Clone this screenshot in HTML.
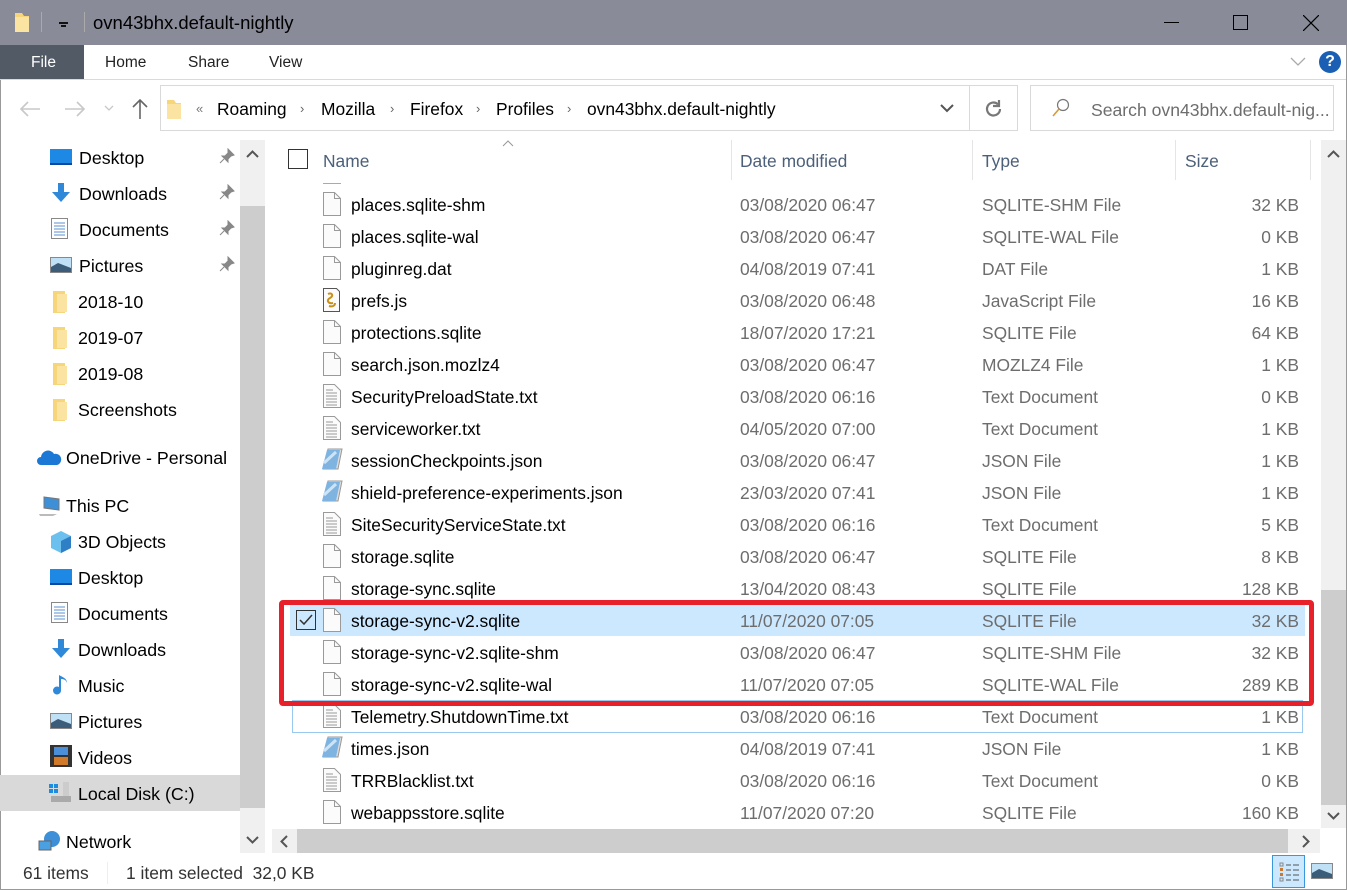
<!DOCTYPE html>
<html><head><meta charset="utf-8"><style>
*{margin:0;padding:0;box-sizing:border-box}
body{width:1347px;height:890px;overflow:hidden;background:#fff;font-family:"Liberation Sans",sans-serif;font-size:17.4px;color:#000;position:relative}
.a{position:absolute}
.t{position:absolute;white-space:nowrap;line-height:20px}
.row{position:absolute;left:272px;width:1048px;height:32px}
.row .n{position:absolute;left:79px;top:7px;white-space:nowrap}
.row .d{position:absolute;left:468px;top:7px;color:#6d6d6d}
.row .y{position:absolute;left:710px;top:7px;color:#6d6d6d}
.row .s{position:absolute;right:21px;top:7px;color:#6d6d6d}
.row svg{position:absolute;left:50px;top:4px}
.nav{position:absolute;white-space:nowrap;line-height:20px;font-size:17.8px;margin-top:1px}
.ic{position:absolute}
.hd{position:absolute;top:151px;color:#4c607a;line-height:20px}
.sep{position:absolute;top:140px;width:1px;height:40px;background:#e5e5e5}
</style></head><body>
<div class="a" style="left:0;top:0;width:1347px;height:45px;background:#898b98"></div>
<svg class="a" style="left:14px;top:11px" width="16" height="22"><path d="M1 2h7l2 3h5v16H1z" fill="#f7d57a"/><path d="M1 6h14v15H1z" fill="#fbe3a1"/></svg>
<div class="a" style="left:41px;top:12px;width:1px;height:20px;background:#aaa"></div>
<div class="a" style="left:59px;top:22px;width:9px;height:2px;background:#111"></div>
<div class="a" style="left:61px;top:25px;width:5px;height:2px;background:#111"></div>
<div class="a" style="left:84px;top:12px;width:1px;height:20px;background:#aaa"></div>
<div class="t" style="left:93px;top:13px;font-size:18.5px">ovn43bhx.default-nightly</div>
<div class="a" style="left:1164px;top:22px;width:15px;height:1px;background:#000"></div>
<div class="a" style="left:1233px;top:15px;width:15px;height:15px;border:1px solid #000"></div>
<svg class="a" style="left:1303px;top:15px" width="16" height="16"><path d="M0 0L16 16M16 0L0 16" stroke="#000" stroke-width="1.2"/></svg>
<div class="a" style="left:0;top:45px;width:84px;height:34px;background:#525a66"></div>
<div class="t" style="left:31px;top:53px;color:#fff;font-size:15.5px">File</div>
<div class="t" style="left:105px;top:53px;font-size:15.5px;color:#222">Home</div>
<div class="t" style="left:188px;top:53px;font-size:15.5px;color:#222">Share</div>
<div class="t" style="left:269px;top:53px;font-size:15.5px;color:#222">View</div>
<svg class="a" style="left:1290px;top:57px" width="16" height="10"><path d="M1 1l7 7 7-7" stroke="#aaa" fill="none" stroke-width="1.3"/></svg>
<div class="a" style="left:1319px;top:51px;width:22px;height:22px;border-radius:50%;background:#1a5fb4;color:#fff;font-weight:bold;font-size:16px;text-align:center;line-height:22px">?</div>
<div class="a" style="left:0;top:79px;width:1347px;height:1px;background:#dadada"></div>
<svg class="a" style="left:18px;top:100px" width="24" height="18"><path d="M22 9H3M10 2L3 9l7 7" stroke="#c8c8c8" fill="none" stroke-width="1.6"/></svg>
<svg class="a" style="left:63px;top:100px" width="24" height="18"><path d="M2 9h19M14 2l7 7-7 7" stroke="#c8c8c8" fill="none" stroke-width="1.6"/></svg>
<svg class="a" style="left:104px;top:105px" width="10" height="6"><path d="M1 1l4 4 4-4" stroke="#c8c8c8" fill="none" stroke-width="1.3"/></svg>
<svg class="a" style="left:131px;top:98px" width="18" height="22"><path d="M9 21V2M2 9l7-7 7 7" stroke="#666" fill="none" stroke-width="1.6"/></svg>
<div class="a" style="left:160px;top:85px;width:810px;height:46px;border:1px solid #d9d9d9"></div>
<div class="a" style="left:969px;top:85px;width:49px;height:46px;border:1px solid #d9d9d9"></div>
<svg class="a" style="left:166px;top:98px" width="16" height="22"><path d="M1 2h7l2 3h5v16H1z" fill="#f7d57a"/><path d="M1 6h14v15H1z" fill="#fbe3a1"/></svg>
<div class="t" style="left:196px;top:99px;font-size:13px;color:#777">«</div>
<div class="t" style="left:217px;top:99px">Roaming</div>
<div class="t" style="left:300px;top:99px;font-size:13px;color:#666">›</div>
<div class="t" style="left:321px;top:99px">Mozilla</div>
<div class="t" style="left:390px;top:99px;font-size:13px;color:#666">›</div>
<div class="t" style="left:410px;top:99px">Firefox</div>
<div class="t" style="left:476px;top:99px;font-size:13px;color:#666">›</div>
<div class="t" style="left:496px;top:99px">Profiles</div>
<div class="t" style="left:567px;top:99px;font-size:13px;color:#666">›</div>
<div class="t" style="left:587px;top:99px">ovn43bhx.default-nightly</div>
<svg class="a" style="left:940px;top:104px" width="14" height="9"><path d="M1 1l6 6 6-6" stroke="#555" fill="none" stroke-width="2"/></svg>
<svg class="a" style="left:984px;top:99px" width="20" height="20"><path d="M16 10a6.5 6.5 0 1 1-2-4.7" stroke="#777" fill="none" stroke-width="2.2"/><path d="M15 1v6h-6" fill="none" stroke="#777" stroke-width="2.2"/></svg>
<div class="a" style="left:1030px;top:85px;width:304px;height:46px;border:1px solid #d9d9d9"></div>
<svg class="a" style="left:1051px;top:98px" width="20" height="20"><circle cx="12" cy="7" r="5.5" stroke="#777" fill="none" stroke-width="1.2"/><path d="M8 11l-6 7" stroke="#d69b3a" stroke-width="1.6"/></svg>
<div class="t" style="left:1091px;top:100px;color:#6d6d6d;font-size:17.6px">Search ovn43bhx.default-nig...</div>
<div class="a" style="left:0;top:80px;width:1px;height:810px;background:#999"></div>
<div class="a" style="left:1346px;top:45px;width:1px;height:845px;background:#999"></div>
<div class="a" style="left:0;top:775px;width:240px;height:36px;background:#d9d9d9"></div>
<svg class="ic" style="left:50px;top:149px" width="22" height="17"><rect x="0" y="0" width="22" height="16" fill="#1e88e5"/><rect x="0" y="14" width="22" height="2" fill="#0d47a1"/></svg>
<div class="nav" style="left:79px;top:147px">Desktop</div>
<svg class="ic" style="left:51px;top:183px" width="20" height="20"><path d="M7 0h6v9h6l-9 10-9-10h6z" fill="#2f88d8"/></svg>
<div class="nav" style="left:79px;top:183px">Downloads</div>
<svg class="ic" style="left:51px;top:218px" width="18" height="22"><rect x=".5" y=".5" width="16" height="20" fill="#fff" stroke="#888"/><path d="M3 5h11M3 8h11M3 11h11M3 14h11M3 17h11" stroke="#5b8fd0"/></svg>
<div class="nav" style="left:79px;top:219px">Documents</div>
<svg class="ic" style="left:50px;top:257px" width="22" height="17"><rect x=".5" y=".5" width="21" height="15" fill="#bfe0f5" stroke="#888"/><path d="M1 10l7-4 13 5v4H1z" fill="#3b5d7a"/></svg>
<div class="nav" style="left:79px;top:255px">Pictures</div>
<svg class="ic" style="left:219px;top:148px" width="16" height="16"><path d="M9 1l6 6-3 1-3 3 0 3-6-6 3 0 3-3z M5 11l-4 4" fill="#888" stroke="#888"/></svg>
<svg class="ic" style="left:219px;top:184px" width="16" height="16"><path d="M9 1l6 6-3 1-3 3 0 3-6-6 3 0 3-3z M5 11l-4 4" fill="#888" stroke="#888"/></svg>
<svg class="ic" style="left:219px;top:220px" width="16" height="16"><path d="M9 1l6 6-3 1-3 3 0 3-6-6 3 0 3-3z M5 11l-4 4" fill="#888" stroke="#888"/></svg>
<svg class="ic" style="left:219px;top:256px" width="16" height="16"><path d="M9 1l6 6-3 1-3 3 0 3-6-6 3 0 3-3z M5 11l-4 4" fill="#888" stroke="#888"/></svg>
<svg class="ic" style="left:53px;top:291px" width="14" height="22"><path d="M0 0h12v22H0z" fill="#f7d57a"/><path d="M4 3h10v18H4z" fill="#fbe3a1"/></svg>
<div class="nav" style="left:78px;top:291px">2018-10</div>
<svg class="ic" style="left:53px;top:327px" width="14" height="22"><path d="M0 0h12v22H0z" fill="#f7d57a"/><path d="M4 3h10v18H4z" fill="#fbe3a1"/></svg>
<div class="nav" style="left:78px;top:327px">2019-07</div>
<svg class="ic" style="left:53px;top:363px" width="14" height="22"><path d="M0 0h12v22H0z" fill="#f7d57a"/><path d="M4 3h10v18H4z" fill="#fbe3a1"/></svg>
<div class="nav" style="left:78px;top:363px">2019-08</div>
<svg class="ic" style="left:53px;top:399px" width="14" height="22"><path d="M0 0h12v22H0z" fill="#f7d57a"/><path d="M4 3h10v18H4z" fill="#fbe3a1"/></svg>
<div class="nav" style="left:78px;top:399px">Screenshots</div>
<svg class="ic" style="left:37px;top:449px" width="25" height="17"><path d="M4 16a4 4 0 0 1 0-8 7 7 0 0 1 13-3 5 5 0 0 1 3 11z" fill="#1b78d4"/></svg>
<div class="nav" style="left:66px;top:447px">OneDrive - Personal</div>
<svg class="ic" style="left:38px;top:495px" width="24" height="22"><path d="M6 2l15 2v11L6 13z" fill="#3d8fd8" stroke="#777"/><path d="M1 19h18l-4 2H2z" fill="#bbb"/></svg>
<div class="nav" style="left:66px;top:495px">This PC</div>
<svg class="ic" style="left:49px;top:530px" width="24" height="24"><path d="M12 1l10 5v12l-10 5-10-5V6z" fill="#6cc0ee"/><path d="M12 11l10-5v12l-10 5z" fill="#2e7fc5"/></svg>
<div class="nav" style="left:78px;top:531px">3D Objects</div>
<svg class="ic" style="left:50px;top:569px" width="22" height="17"><rect x="0" y="0" width="22" height="16" fill="#1e88e5"/><rect x="0" y="14" width="22" height="2" fill="#0d47a1"/></svg>
<div class="nav" style="left:78px;top:567px">Desktop</div>
<svg class="ic" style="left:51px;top:602px" width="18" height="22"><rect x=".5" y=".5" width="16" height="20" fill="#fff" stroke="#888"/><path d="M3 5h11M3 8h11M3 11h11M3 14h11M3 17h11" stroke="#5b8fd0"/></svg>
<div class="nav" style="left:78px;top:603px">Documents</div>
<svg class="ic" style="left:51px;top:639px" width="20" height="20"><path d="M7 0h6v9h6l-9 10-9-10h6z" fill="#2f88d8"/></svg>
<div class="nav" style="left:78px;top:639px">Downloads</div>
<svg class="ic" style="left:52px;top:674px" width="18" height="22"><path d="M9 1v15a4 4 0 1 1-2-3V1c3 2 8 3 8 8-1-3-3-4-6-4" fill="#2f88d8"/></svg>
<div class="nav" style="left:78px;top:675px">Music</div>
<svg class="ic" style="left:50px;top:713px" width="22" height="17"><rect x=".5" y=".5" width="21" height="15" fill="#bfe0f5" stroke="#888"/><path d="M1 10l7-4 13 5v4H1z" fill="#3b5d7a"/></svg>
<div class="nav" style="left:78px;top:711px">Pictures</div>
<svg class="ic" style="left:50px;top:745px" width="22" height="22"><rect width="22" height="22" fill="#333"/><rect x="4" y="2" width="14" height="8" fill="#4a8fd8"/><rect x="4" y="12" width="14" height="8" fill="#d07a2a"/></svg>
<div class="nav" style="left:78px;top:747px">Videos</div>
<svg class="ic" style="left:49px;top:782px" width="24" height="22"><rect x="0" y="2" width="4" height="4" fill="#1b8de0"/><rect x="5" y="2" width="4" height="4" fill="#1b8de0"/><rect x="0" y="7" width="4" height="4" fill="#1b8de0"/><rect x="5" y="7" width="4" height="4" fill="#1b8de0"/><path d="M2 14h20v6H2z" fill="#aaa"/><path d="M14 0h6v14h-6z" fill="#ccc"/></svg>
<div class="nav" style="left:78px;top:783px">Local Disk (C:)</div>
<svg class="ic" style="left:38px;top:830px" width="24" height="22"><circle cx="14" cy="9" r="8" fill="#3d8fd8"/><rect x="1" y="11" width="12" height="9" fill="#4aa0e0" stroke="#666"/></svg>
<div class="nav" style="left:66px;top:831px">Network</div>
<div class="a" style="left:240px;top:140px;width:25px;height:713px;background:#f0f0f0"></div>
<div class="a" style="left:240px;top:206px;width:25px;height:602px;background:#cdcdcd"></div>
<svg class="a" style="left:246px;top:150px" width="13" height="8"><path d="M1 7l5.5-5.5L12 7" stroke="#555" fill="none" stroke-width="2"/></svg>
<svg class="a" style="left:246px;top:836px" width="13" height="8"><path d="M1 1l5.5 5.5L12 1" stroke="#555" fill="none" stroke-width="2"/></svg>
<div class="a" style="left:288px;top:149px;width:20px;height:20px;border:1px solid #333"></div>
<div class="hd" style="left:323px">Name</div>
<svg class="a" style="left:502px;top:140px" width="12" height="7"><path d="M1 6l5-5 5 5" stroke="#999" fill="none"/></svg>
<div class="sep" style="left:731px"></div>
<div class="hd" style="left:740px">Date modified</div>
<div class="sep" style="left:972px"></div>
<div class="hd" style="left:982px">Type</div>
<div class="sep" style="left:1175px"></div>
<div class="hd" style="left:1185px">Size</div>
<div class="sep" style="left:1310px"></div>
<div class="a" style="left:323px;top:180px;width:18px;height:4px;border-bottom:1px solid #aaa"></div>
<div class="a" style="left:290px;top:604px;width:1015px;height:32px;background:#cce8ff"></div>
<div class="a" style="left:292px;top:700px;width:1011px;height:33px;border:1px solid #99c9ef"></div>
<div class="a" style="left:296px;top:610px;width:20px;height:20px;border:1px solid #333"></div>
<svg class="a" style="left:299px;top:614px" width="14" height="12"><path d="M1 6l4 4 8-9" stroke="#333" fill="none" stroke-width="1.5"/></svg>

<div class="row" style="top:188px"><svg width="20" height="24"><path d="M1.5 .5h11l6 6v17h-17z" fill="#fbfbfb" stroke="#9a9a9a"/><path d="M12.5 .5v6h6" fill="none" stroke="#9a9a9a"/></svg><span class="n">places.sqlite-shm</span><span class="d">03/08/2020 06:47</span><span class="y">SQLITE-SHM File</span><span class="s">32 KB</span></div>
<div class="row" style="top:220px"><svg width="20" height="24"><path d="M1.5 .5h11l6 6v17h-17z" fill="#fbfbfb" stroke="#9a9a9a"/><path d="M12.5 .5v6h6" fill="none" stroke="#9a9a9a"/></svg><span class="n">places.sqlite-wal</span><span class="d">03/08/2020 06:47</span><span class="y">SQLITE-WAL File</span><span class="s">0 KB</span></div>
<div class="row" style="top:252px"><svg width="20" height="24"><path d="M1.5 .5h11l6 6v17h-17z" fill="#fbfbfb" stroke="#9a9a9a"/><path d="M12.5 .5v6h6" fill="none" stroke="#9a9a9a"/></svg><span class="n">pluginreg.dat</span><span class="d">04/08/2019 07:41</span><span class="y">DAT File</span><span class="s">1 KB</span></div>
<div class="row" style="top:284px"><svg width="20" height="24"><path d="M1.5 .5h13l3 3v20h-16z" fill="#fbfbfb" stroke="#555"/><path d="M6 6c4-2 6 2 2 4s-2 6 3 5M7 18c3 1 6 0 6-3" stroke="#c8901a" fill="none" stroke-width="2"/></svg><span class="n">prefs.js</span><span class="d">03/08/2020 06:48</span><span class="y">JavaScript File</span><span class="s">16 KB</span></div>
<div class="row" style="top:316px"><svg width="20" height="24"><path d="M1.5 .5h11l6 6v17h-17z" fill="#fbfbfb" stroke="#9a9a9a"/><path d="M12.5 .5v6h6" fill="none" stroke="#9a9a9a"/></svg><span class="n">protections.sqlite</span><span class="d">18/07/2020 17:21</span><span class="y">SQLITE File</span><span class="s">64 KB</span></div>
<div class="row" style="top:348px"><svg width="20" height="24"><path d="M1.5 .5h11l6 6v17h-17z" fill="#fbfbfb" stroke="#9a9a9a"/><path d="M12.5 .5v6h6" fill="none" stroke="#9a9a9a"/></svg><span class="n">search.json.mozlz4</span><span class="d">03/08/2020 06:47</span><span class="y">MOZLZ4 File</span><span class="s">1 KB</span></div>
<div class="row" style="top:380px"><svg width="20" height="24"><path d="M1.5 .5h11l6 6v17h-17z" fill="#fbfbfb" stroke="#9a9a9a"/><path d="M4 6h7M4 9h11M4 12h11M4 15h11M4 18h11M4 21h11" stroke="#999"/></svg><span class="n">SecurityPreloadState.txt</span><span class="d">03/08/2020 06:16</span><span class="y">Text Document</span><span class="s">0 KB</span></div>
<div class="row" style="top:412px"><svg width="20" height="24"><path d="M1.5 .5h11l6 6v17h-17z" fill="#fbfbfb" stroke="#9a9a9a"/><path d="M4 6h7M4 9h11M4 12h11M4 15h11M4 18h11M4 21h11" stroke="#999"/></svg><span class="n">serviceworker.txt</span><span class="d">04/05/2020 07:00</span><span class="y">Text Document</span><span class="s">1 KB</span></div>
<div class="row" style="top:444px"><svg width="22" height="24"><path d="M6 1h14l-4 20H1z" fill="#ddd" stroke="#999"/><path d="M5 2h13l-4 19H0z" fill="#7fb3e0"/><path d="M2 15l12-11" stroke="#cde4f7" stroke-width="3"/></svg><span class="n">sessionCheckpoints.json</span><span class="d">03/08/2020 06:47</span><span class="y">JSON File</span><span class="s">1 KB</span></div>
<div class="row" style="top:476px"><svg width="22" height="24"><path d="M6 1h14l-4 20H1z" fill="#ddd" stroke="#999"/><path d="M5 2h13l-4 19H0z" fill="#7fb3e0"/><path d="M2 15l12-11" stroke="#cde4f7" stroke-width="3"/></svg><span class="n">shield-preference-experiments.json</span><span class="d">23/03/2020 07:41</span><span class="y">JSON File</span><span class="s">1 KB</span></div>
<div class="row" style="top:508px"><svg width="20" height="24"><path d="M1.5 .5h11l6 6v17h-17z" fill="#fbfbfb" stroke="#9a9a9a"/><path d="M4 6h7M4 9h11M4 12h11M4 15h11M4 18h11M4 21h11" stroke="#999"/></svg><span class="n">SiteSecurityServiceState.txt</span><span class="d">03/08/2020 06:16</span><span class="y">Text Document</span><span class="s">5 KB</span></div>
<div class="row" style="top:540px"><svg width="20" height="24"><path d="M1.5 .5h11l6 6v17h-17z" fill="#fbfbfb" stroke="#9a9a9a"/><path d="M12.5 .5v6h6" fill="none" stroke="#9a9a9a"/></svg><span class="n">storage.sqlite</span><span class="d">03/08/2020 06:47</span><span class="y">SQLITE File</span><span class="s">8 KB</span></div>
<div class="row" style="top:572px"><svg width="20" height="24"><path d="M1.5 .5h11l6 6v17h-17z" fill="#fbfbfb" stroke="#9a9a9a"/><path d="M12.5 .5v6h6" fill="none" stroke="#9a9a9a"/></svg><span class="n">storage-sync.sqlite</span><span class="d">13/04/2020 08:43</span><span class="y">SQLITE File</span><span class="s">128 KB</span></div>
<div class="row" style="top:604px"><svg width="20" height="24"><path d="M1.5 .5h11l6 6v17h-17z" fill="#fbfbfb" stroke="#9a9a9a"/><path d="M12.5 .5v6h6" fill="none" stroke="#9a9a9a"/></svg><span class="n">storage-sync-v2.sqlite</span><span class="d">11/07/2020 07:05</span><span class="y">SQLITE File</span><span class="s">32 KB</span></div>
<div class="row" style="top:636px"><svg width="20" height="24"><path d="M1.5 .5h11l6 6v17h-17z" fill="#fbfbfb" stroke="#9a9a9a"/><path d="M12.5 .5v6h6" fill="none" stroke="#9a9a9a"/></svg><span class="n">storage-sync-v2.sqlite-shm</span><span class="d">03/08/2020 06:47</span><span class="y">SQLITE-SHM File</span><span class="s">32 KB</span></div>
<div class="row" style="top:668px"><svg width="20" height="24"><path d="M1.5 .5h11l6 6v17h-17z" fill="#fbfbfb" stroke="#9a9a9a"/><path d="M12.5 .5v6h6" fill="none" stroke="#9a9a9a"/></svg><span class="n">storage-sync-v2.sqlite-wal</span><span class="d">11/07/2020 07:05</span><span class="y">SQLITE-WAL File</span><span class="s">289 KB</span></div>
<div class="row" style="top:700px"><svg width="20" height="24"><path d="M1.5 .5h11l6 6v17h-17z" fill="#fbfbfb" stroke="#9a9a9a"/><path d="M4 6h7M4 9h11M4 12h11M4 15h11M4 18h11M4 21h11" stroke="#999"/></svg><span class="n">Telemetry.ShutdownTime.txt</span><span class="d">03/08/2020 06:16</span><span class="y">Text Document</span><span class="s">1 KB</span></div>
<div class="row" style="top:732px"><svg width="22" height="24"><path d="M6 1h14l-4 20H1z" fill="#ddd" stroke="#999"/><path d="M5 2h13l-4 19H0z" fill="#7fb3e0"/><path d="M2 15l12-11" stroke="#cde4f7" stroke-width="3"/></svg><span class="n">times.json</span><span class="d">04/08/2019 07:41</span><span class="y">JSON File</span><span class="s">1 KB</span></div>
<div class="row" style="top:764px"><svg width="20" height="24"><path d="M1.5 .5h11l6 6v17h-17z" fill="#fbfbfb" stroke="#9a9a9a"/><path d="M4 6h7M4 9h11M4 12h11M4 15h11M4 18h11M4 21h11" stroke="#999"/></svg><span class="n">TRRBlacklist.txt</span><span class="d">03/08/2020 06:16</span><span class="y">Text Document</span><span class="s">0 KB</span></div>
<div class="row" style="top:796px"><svg width="20" height="24"><path d="M1.5 .5h11l6 6v17h-17z" fill="#fbfbfb" stroke="#9a9a9a"/><path d="M12.5 .5v6h6" fill="none" stroke="#9a9a9a"/></svg><span class="n">webappsstore.sqlite</span><span class="d">11/07/2020 07:20</span><span class="y">SQLITE File</span><span class="s">160 KB</span></div>
<div class="a" style="left:279px;top:600px;width:1035px;height:106px;border:5px solid #e8202a;border-radius:4px"></div>
<div class="a" style="left:1321px;top:140px;width:25px;height:688px;background:#f0f0f0"></div>
<div class="a" style="left:1321px;top:590px;width:25px;height:215px;background:#cdcdcd"></div>
<svg class="a" style="left:1327px;top:150px" width="13" height="8"><path d="M1 7l5.5-5.5L12 7" stroke="#555" fill="none" stroke-width="2"/></svg>
<svg class="a" style="left:1327px;top:812px" width="13" height="8"><path d="M1 1l5.5 5.5L12 1" stroke="#555" fill="none" stroke-width="2"/></svg>
<div class="a" style="left:272px;top:829px;width:1048px;height:24px;background:#f0f0f0"></div>
<div class="a" style="left:297px;top:829px;width:991px;height:24px;background:#cdcdcd"></div>
<svg class="a" style="left:280px;top:835px" width="8" height="13"><path d="M7 1L1.5 6.5 7 12" stroke="#555" fill="none" stroke-width="2"/></svg>
<svg class="a" style="left:1302px;top:835px" width="8" height="13"><path d="M1 1l5.5 5.5L1 12" stroke="#555" fill="none" stroke-width="2"/></svg>
<div class="t" style="left:23px;top:863px;font-size:17.4px;color:#333">61 items</div>
<div class="a" style="left:107px;top:862px;width:1px;height:22px;background:#eee"></div>
<div class="t" style="left:126px;top:863px;font-size:17.4px;color:#333">1 item selected&nbsp;&nbsp;32,0 KB</div>
<div class="a" style="left:1272px;top:855px;width:33px;height:33px;background:#cce8ff;border:1px solid #3a96dd"></div>
<svg class="a" style="left:1279px;top:862px" width="22" height="20"><rect x="1" y="1" width="3" height="3" fill="none" stroke="#888"/><rect x="1" y="6" width="3" height="3" fill="#c87a30"/><rect x="1" y="11" width="3" height="3" fill="#c87a30"/><rect x="1" y="16" width="3" height="3" fill="none" stroke="#888"/><path d="M7 3h5M14 3h6M7 8h5M14 8h6M7 13h5M14 13h6M7 18h5M14 18h6" stroke="#555"/></svg>
<svg class="a" style="left:1311px;top:863px" width="23" height="17"><rect x=".5" y=".5" width="21" height="15" fill="#bfe0f5" stroke="#888"/><path d="M1 10l7-4 13 5v4H1z" fill="#3b5d7a"/></svg>
<div class="a" style="left:0;top:889px;width:1347px;height:1px;background:#999"></div>
</body></html>
